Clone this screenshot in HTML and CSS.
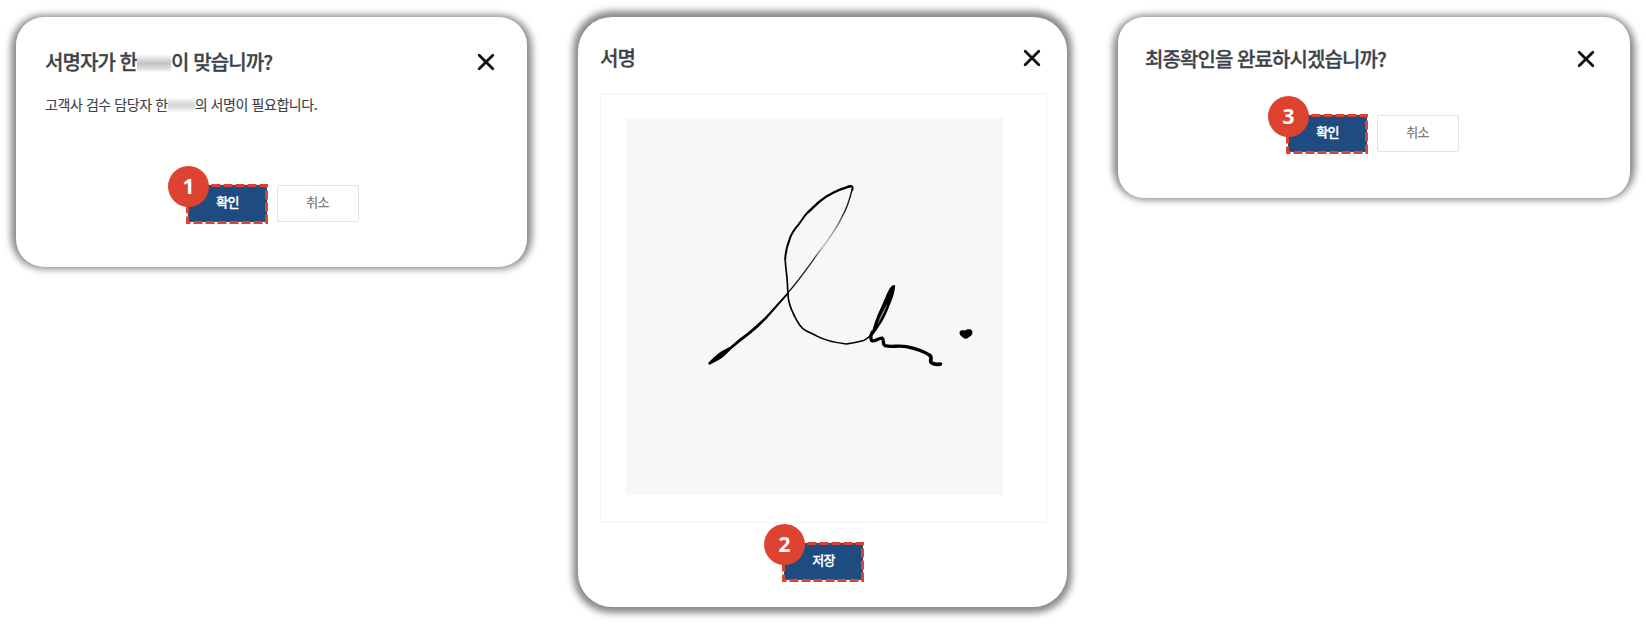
FILE: index.html
```html
<!DOCTYPE html>
<html lang="ko">
<head>
<meta charset="utf-8">
<title>서명 확인</title>
<link rel="stylesheet" href="styles.css">
</head>
<body>
<main class="steps">
  <section class="card card-signer">
    <header class="card-head">
      <h2 class="title">서명자가 한<span class="mask mask-title"></span>이 맞습니까?</h2>
      <svg class="close" viewBox="0 0 18 18"><path d="M2.2 2.2 15.8 15.8M15.8 2.2 2.2 15.8"/></svg>
    </header>
    <p class="desc">고객사 검수 담당자 한<span class="mask mask-desc"></span>의 서명이 필요합니다.</p>
    <div class="actions">
      <div class="marked">
        <button class="btn btn-primary">확인</button>
        <svg class="dashes" viewBox="0 0 82 40"><rect x="1.5" y="1.5" width="79" height="37"/></svg>
        <span class="badge">1</span>
      </div>
      <button class="btn btn-cancel">취소</button>
    </div>
  </section>

  <section class="card card-sign">
    <header class="card-head">
      <h2 class="title">서명</h2>
      <svg class="close" viewBox="0 0 18 18"><path d="M2.2 2.2 15.8 15.8M15.8 2.2 2.2 15.8"/></svg>
    </header>
    <div class="frame">
      <svg class="pad" viewBox="-196 -156 1134 1134">
        <defs>
          <linearGradient id="fade" gradientUnits="userSpaceOnUse" x1="484" y1="50" x2="290" y2="370">
            <stop offset="0" stop-color="#000"/>
            <stop offset=".2" stop-color="#222"/>
            <stop offset=".4" stop-color="#999"/>
            <stop offset=".53" stop-color="#bbb"/>
            <stop offset=".66" stop-color="#333"/>
            <stop offset="1" stop-color="#000"/>
          </linearGradient>
        </defs>
        <path class="ink" d="M52 580 C60 571 76 556 90 546 L118 531 L144 509 L172 488 L197 466 L222 443 L290 368 L294 372 L226 449 L201 474 L175 496 L148 517 L122 538 L100 560 C88 571 70 579 56 586 Q50 586 52 580Z"/>
        <path class="pen" stroke="url(#fade)" stroke-width="4" d="M291 370 C325 331 352 292 378 256 C408 215 438 178 454 140 C469 117 477 88 485 56"/>
        <path class="pen" stroke-width="6" d="M485 60 C488 49 482 47 472 50"/>
        <path class="pen" stroke-width="7" d="M480 49 C465 54 448 58 427 69 C409 78 397 86 384 97 L352 127"/>
        <path class="pen" stroke-width="6" d="M352 127 C342 136 334 150 324 163 C311 178 301 193 297 206 C288 230 284 245 283 267"/>
        <path class="pen" stroke-width="5" d="M283 267 C283 290 288 311 289 335 L291 370 C291 396 299 417 309 436"/>
        <path class="pen" stroke-width="4.8" d="M309 436 C316 450 323 467 337 478 C350 488 365 492 380 501 C404 514 427 519 467 524 C487 521 505 517 516 514 C528 511 536 501 544 493"/>
        <path class="ink" d="M542 496 C547 472 557 442 571 414 C581 393 590 367 599 354 Q607 342 614 348 C612 363 610 377 603 393 C593 417 583 446 568 466 C560 478 554 490 546 497Z"/>
        <path class="glint" d="M560 465 C566 444 578 421 590 402 C586 420 574 445 560 465Z"/>
        <path class="pen" stroke-width="10" d="M545 488 C540 497 540 508 543 514 C555 517 563 505 574 506 C582 510 573 522 583 529 C604 534 625 527 647 532 C675 538 705 549 718 558"/>
        <path class="pen" stroke-width="11" d="M718 558 C728 566 714 574 724 581 C733 587 743 585 750 584"/>
        <path class="ink" d="M807 490 C808 482 815 482 824 483 C830 479 840 477 845 484 C849 493 842 501 834 504 C825 511 820 507 814 501 Q807 497 807 490Z"/>
      </svg>
    </div>
    <div class="actions">
      <div class="marked">
        <button class="btn btn-primary">저장</button>
        <svg class="dashes" viewBox="0 0 82 40"><rect x="1.5" y="1.5" width="79" height="37"/></svg>
        <span class="badge">2</span>
      </div>
    </div>
  </section>

  <section class="card card-final">
    <header class="card-head">
      <h2 class="title">최종확인을 완료하시겠습니까?</h2>
      <svg class="close" viewBox="0 0 18 18"><path d="M2.2 2.2 15.8 15.8M15.8 2.2 2.2 15.8"/></svg>
    </header>
    <div class="actions">
      <div class="marked">
        <button class="btn btn-primary">확인</button>
        <svg class="dashes" viewBox="0 0 82 40"><rect x="1.5" y="1.5" width="79" height="37"/></svg>
        <span class="badge">3</span>
      </div>
      <button class="btn btn-cancel">취소</button>
    </div>
  </section>
</main>
</body>
</html>
```
FILE: styles.css
```css
* { box-sizing: border-box; }

body {
  margin: 0;
  background: #fff;
  font-family: "Noto Sans CJK KR", "Noto Sans", sans-serif;
  color: #3d4249;
}

.steps {
  display: flex;
  align-items: flex-start;
  gap: 51px;
  height: 624px;
  padding: 17px 16px 0;
  position: relative;
  z-index: 0;
  overflow: hidden;
}

.card {
  position: relative;
  flex: none;
  background: #fff;
}

/* Soft shadow, slightly larger than the card itself */
.card::before {
  content: "";
  position: absolute;
  z-index: -1;
  inset: -2px -5px;
  border-radius: 32px;
  background: #888;
  filter: blur(3.5px);
}

.card-signer { width: 511px; height: 250px; border-radius: 28px; padding: 30px 32px 0 29px; }
.card-sign { width: 489px; height: 590px; border-radius: 34px; padding: 26px 20px 0 22px; }
.card-final { width: 512px; height: 181px; border-radius: 26px; padding: 27px 35px 0 27px; }
.card-sign::before { inset: -6px -5px; border-radius: 38px; }

.card-head {
  display: flex;
  align-items: center;
  justify-content: space-between;
  height: 29px;
}

.card-sign .card-head { padding-right: 6px; }

.title {
  margin: -1px 0 0;
  font-size: 20px;
  line-height: 29px;
  font-weight: 500;
  letter-spacing: -.92px;
  white-space: nowrap;
  -webkit-text-stroke: .3px;
}

.close { width: 18px; height: 18px; flex: none; }
.close path { fill: none; stroke: #111; stroke-width: 2.8; stroke-linecap: round; }

.desc {
  margin: 18px 0 0;
  font-size: 14px;
  line-height: 20px;
  letter-spacing: -.42px;
  white-space: nowrap;
  -webkit-text-stroke: .15px;
}

.mask {
  display: inline-block;
  background: linear-gradient(#fafafa 0, #d5d6d7 30%, #c2c3c4 50%, #d8d9d9 75%, #fafafa 100%);
}

.mask-title { width: 34px; height: 17px; vertical-align: -2px; }
.mask-desc { width: 27px; height: 14px; vertical-align: -2px; opacity: .7; }

.actions { display: flex; align-items: flex-start; }
.card-signer .actions { margin: 70px 0 0 141px; }
.card-sign .actions { margin: 19px 0 0 182px; }
.card-final .actions { margin: 42px 0 0 141px; }

.marked {
  position: relative;
  width: 82px;
  height: 40px;
  padding: 1px 1px 0 2px;
  margin-right: 8.5px;
}

.btn {
  display: flex;
  align-items: center;
  justify-content: center;
  margin: 0;
  padding: 0 0 3px;
  height: 37px;
  border: 0;
  border-radius: 2px;
  font: 500 13px/18px "Noto Sans CJK KR", sans-serif;
  letter-spacing: -.8px;
}

.btn-primary { width: 79px; background: #1e4b80; color: #fff; -webkit-text-stroke: .3px; }
.btn-cancel { width: 82px; margin-top: 1px; background: #fff; border: 1px solid #dfe3ea; color: #808080; }
.card-final .btn { padding-bottom: 4px; }

.dashes { position: absolute; inset: 0; width: 82px; height: 40px; }
.dashes rect { fill: none; stroke: #dd4330; stroke-width: 3; stroke-dasharray: 9 3; }

.badge {
  position: absolute;
  left: -18px;
  top: -18px;
  width: 41px;
  height: 41px;
  border-radius: 50%;
  background: #dd4330;
  color: #fff;
  font: 700 21px/40px "Noto Sans", sans-serif;
  text-align: center;
}
.card-final .marked { height: 40px; margin-top: -1px; }
.card-final .btn-cancel { margin-top: 0; }

.frame {
  width: 447px;
  height: 430px;
  margin-top: 21px;
  padding: 24px 24px 24px 25px;
  border: 1px solid #f3f3f3;
}

.pad { display: block; width: 377px; height: 377px; background: #f7f7f7; }
.ink { fill: #000; }
.glint { fill: #777; }
.pen { fill: none; stroke-linecap: round; stroke-linejoin: round; }
.pen:not([stroke]) { stroke: #000; }
```
